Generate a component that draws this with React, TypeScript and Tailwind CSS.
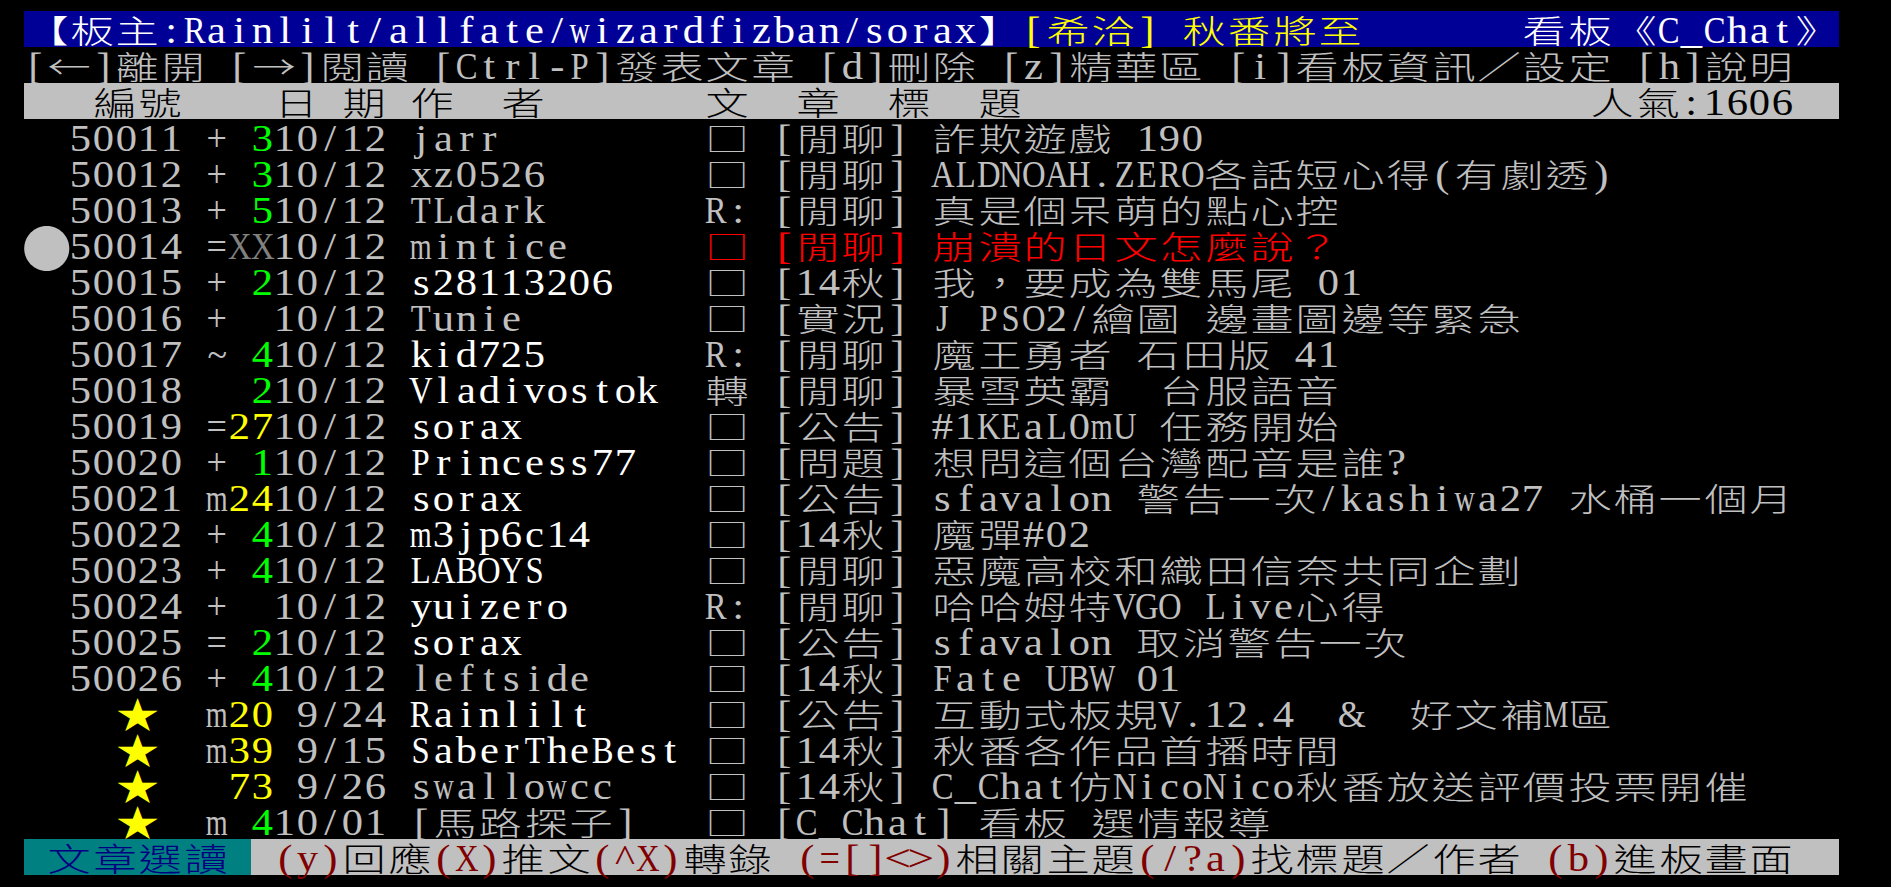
import React from 'react'

// terminal palette
const GRAY = 'text-[#c0c0c0]'
const WHITE = 'text-white'
const GREEN = 'text-[#00ff00]'
const YELLOW = 'text-[#ffff00]'
const RED = 'text-[#ff0000]'
const DGRAY = 'text-[#808080]'
const BLACK = 'text-black'
const NAVY = 'text-[#000080]'
const DRED = 'text-[#800000]'

const BG_BLUE = 'bg-[#000096]'
const BG_GRAY = 'bg-[#c0c0c0]'
const BG_TEAL = 'bg-[#008080]'

const COLS = 80

type Seg = { t: string; c: string; bg?: string }

type Post = {
  n: string
  m: string
  r: string
  d: string
  a: string
  bright: boolean
  k: string
  title: string
  cursor?: boolean
  red?: boolean
}

const POSTS: Post[] = [
  { n: '50011', m: '+', r: '3', d: '10/12', a: 'jarr', bright: false, k: '□', title: '[閒聊] 詐欺遊戲 190' },
  { n: '50012', m: '+', r: '3', d: '10/12', a: 'xz0526', bright: false, k: '□', title: '[閒聊] ALDNOAH.ZERO各話短心得(有劇透)' },
  { n: '50013', m: '+', r: '5', d: '10/12', a: 'TLdark', bright: false, k: 'R:', title: '[閒聊] 真是個呆萌的點心控' },
  { n: '50014', m: '=', r: 'XX', d: '10/12', a: 'mintice', bright: false, k: '□', title: '[閒聊] 崩潰的日文怎麼說？', cursor: true, red: true },
  { n: '50015', m: '+', r: '2', d: '10/12', a: 's28113206', bright: true, k: '□', title: '[14秋] 我，要成為雙馬尾 01' },
  { n: '50016', m: '+', r: '', d: '10/12', a: 'Tunie', bright: false, k: '□', title: '[實況] J PSO2/繪圖 邊畫圖邊等緊急' },
  { n: '50017', m: '~', r: '4', d: '10/12', a: 'kid725', bright: true, k: 'R:', title: '[閒聊] 魔王勇者 石田版 41' },
  { n: '50018', m: ' ', r: '2', d: '10/12', a: 'Vladivostok', bright: true, k: '轉', title: '[閒聊] 暴雪英霸  台服語音' },
  { n: '50019', m: '=', r: '27', d: '10/12', a: 'sorax', bright: true, k: '□', title: '[公告] #1KEaL0mU 任務開始' },
  { n: '50020', m: '+', r: '1', d: '10/12', a: 'Princess77', bright: true, k: '□', title: '[問題] 想問這個台灣配音是誰?' },
  { n: '50021', m: 'm', r: '24', d: '10/12', a: 'sorax', bright: true, k: '□', title: '[公告] sfavalon 警告一次/kashiwa27 水桶一個月' },
  { n: '50022', m: '+', r: '4', d: '10/12', a: 'm3jp6c14', bright: true, k: '□', title: '[14秋] 魔彈#02' },
  { n: '50023', m: '+', r: '4', d: '10/12', a: 'LABOYS', bright: true, k: '□', title: '[閒聊] 惡魔高校和織田信奈共同企劃' },
  { n: '50024', m: '+', r: '', d: '10/12', a: 'yuizero', bright: true, k: 'R:', title: '[閒聊] 哈哈姆特VGO Live心得' },
  { n: '50025', m: '=', r: '2', d: '10/12', a: 'sorax', bright: true, k: '□', title: '[公告] sfavalon 取消警告一次' },
  { n: '50026', m: '+', r: '4', d: '10/12', a: 'leftside', bright: false, k: '□', title: '[14秋] Fate UBW 01' },
  { n: '★', m: 'm', r: '20', d: ' 9/24', a: 'Rainlilt', bright: true, k: '□', title: '[公告] 互動式板規V.12.4  &  好文補M區' },
  { n: '★', m: 'm', r: '39', d: ' 9/15', a: 'SaberTheBest', bright: true, k: '□', title: '[14秋] 秋番各作品首播時間' },
  { n: '★', m: ' ', r: '73', d: ' 9/26', a: 'swallowcc', bright: false, k: '□', title: '[14秋] C_Chat仿NicoNico秋番放送評價投票開催' },
  { n: '★', m: 'm', r: '4', d: '10/01', a: '[馬路探子]', bright: false, k: '□', title: '[C_Chat] 看板 選情報導' },
]

const isWide = (ch: string) => ch.charCodeAt(0) > 0x7f

const width = (s: string) => Array.from(s).reduce((n, ch) => n + (isWide(ch) ? 2 : 1), 0)

function recColor(r: string) {
  if (r === 'XX') return DGRAY
  if (r.length === 2) return YELLOW
  return GREEN
}

function postRow(p: Post): Seg[] {
  const segs: Seg[] = []
  segs.push({ t: p.cursor ? '●' : '  ', c: GRAY })
  if (p.n === '★') {
    segs.push({ t: '  ', c: GRAY })
    segs.push({ t: '★', c: YELLOW })
    segs.push({ t: ' ', c: GRAY })
  } else {
    segs.push({ t: p.n, c: GRAY })
  }
  segs.push({ t: ' ' + p.m, c: GRAY })
  segs.push({ t: p.r.padStart(2, ' '), c: recColor(p.r) })
  segs.push({ t: p.d + ' ', c: GRAY })
  segs.push({ t: p.a + ' '.repeat(13 - width(p.a)), c: p.bright ? WHITE : GRAY })
  segs.push({ t: p.k + ' ' + p.title, c: p.red ? RED : GRAY })
  return segs
}

const TOP: Seg[] = [
  { t: '【板主:Rainlilt/allfate/wizardfizban/sorax】', c: WHITE, bg: BG_BLUE },
  { t: '[希洽] 秋番將至', c: YELLOW, bg: BG_BLUE },
  { t: '       看板《C_Chat》', c: WHITE, bg: BG_BLUE },
]

const MENU: Seg[] = [
  { t: '[←]離開 [→]閱讀 [Ctrl-P]發表文章 [d]刪除 [z]精華區 [i]看板資訊／設定 [h]說明', c: GRAY },
]

const HEAD: Seg[] = [
  { t: '   編號    日 期 作  者       文  章  標  題', c: BLACK, bg: BG_GRAY },
  { t: '                         人氣:1606', c: BLACK, bg: BG_GRAY },
]

const FOOT: Seg[] = [
  { t: ' 文章選讀 ', c: NAVY, bg: BG_TEAL },
  { t: ' (y)', c: DRED, bg: BG_GRAY },
  { t: '回應', c: BLACK, bg: BG_GRAY },
  { t: '(X)', c: DRED, bg: BG_GRAY },
  { t: '推文', c: BLACK, bg: BG_GRAY },
  { t: '(^X)', c: DRED, bg: BG_GRAY },
  { t: '轉錄 ', c: BLACK, bg: BG_GRAY },
  { t: '(=[]<>)', c: DRED, bg: BG_GRAY },
  { t: '相關主題', c: BLACK, bg: BG_GRAY },
  { t: '(/?a)', c: DRED, bg: BG_GRAY },
  { t: '找標題／作者 ', c: BLACK, bg: BG_GRAY },
  { t: '(b)', c: DRED, bg: BG_GRAY },
  { t: '進板畫面', c: BLACK, bg: BG_GRAY },
]

const SERIF = "font-['Liberation_Serif',serif] text-[38px] leading-[34px] translate-y-[1px]"
const CJK = "font-['Noto_Sans_CJK_TC',sans-serif] font-light leading-[34px]"

function glyphClass(ch: string) {
  if (ch === '●') return `${CJK} text-[50px]`
  if (ch === '★') return `${CJK} text-[37px] scale-x-[1.15]`
  if (isWide(ch)) return `${CJK} text-[32px] scale-x-[1.35]`
  if ('mwMW'.includes(ch)) return `${SERIF} scale-x-[0.74]`
  if (ch >= 'A' && ch <= 'Z') return `${SERIF} scale-x-[0.86]`
  if ('<>'.includes(ch)) return `${SERIF} scale-x-[1.25]`
  if ('+=&~'.includes(ch)) return `${SERIF} scale-x-[0.95]`
  return `${SERIF} scale-x-[1.12]`
}

function TermRow({ segs, fill }: { segs: Seg[]; fill?: string }) {
  const cells: React.ReactNode[] = []
  let col = 0
  segs.forEach((s, si) => {
    Array.from(s.t).forEach((ch, ci) => {
      const wide = isWide(ch)
      col += wide ? 2 : 1
      cells.push(
        <span
          key={`${si}-${ci}`}
          className={`inline-flex h-[36px] shrink-0 items-center justify-center ${wide ? 'w-[45.4px]' : 'w-[22.7px]'} ${s.bg ?? ''}`}
        >
          {ch !== ' ' && <span className={`inline-block whitespace-pre ${glyphClass(ch)} ${s.c}`}>{ch}</span>}
        </span>
      )
    })
  })
  for (let i = col; i < COLS; i++) {
    cells.push(<span key={`pad-${i}`} className={`inline-block h-[36px] w-[22.7px] shrink-0 ${fill ?? ''}`} />)
  }
  return <div className="flex h-[36px] w-[1816px]">{cells}</div>
}

export default function App() {
  return (
    <div className="h-[887px] w-[1891px] overflow-hidden bg-black pl-[24px] pt-[11px]">
      <TermRow segs={TOP} fill={BG_BLUE} />
      <TermRow segs={MENU} />
      <TermRow segs={HEAD} fill={BG_GRAY} />
      {POSTS.map(p => (
        <TermRow key={p.n + p.a + p.d} segs={postRow(p)} />
      ))}
      <TermRow segs={FOOT} fill={BG_GRAY} />
    </div>
  )
}
